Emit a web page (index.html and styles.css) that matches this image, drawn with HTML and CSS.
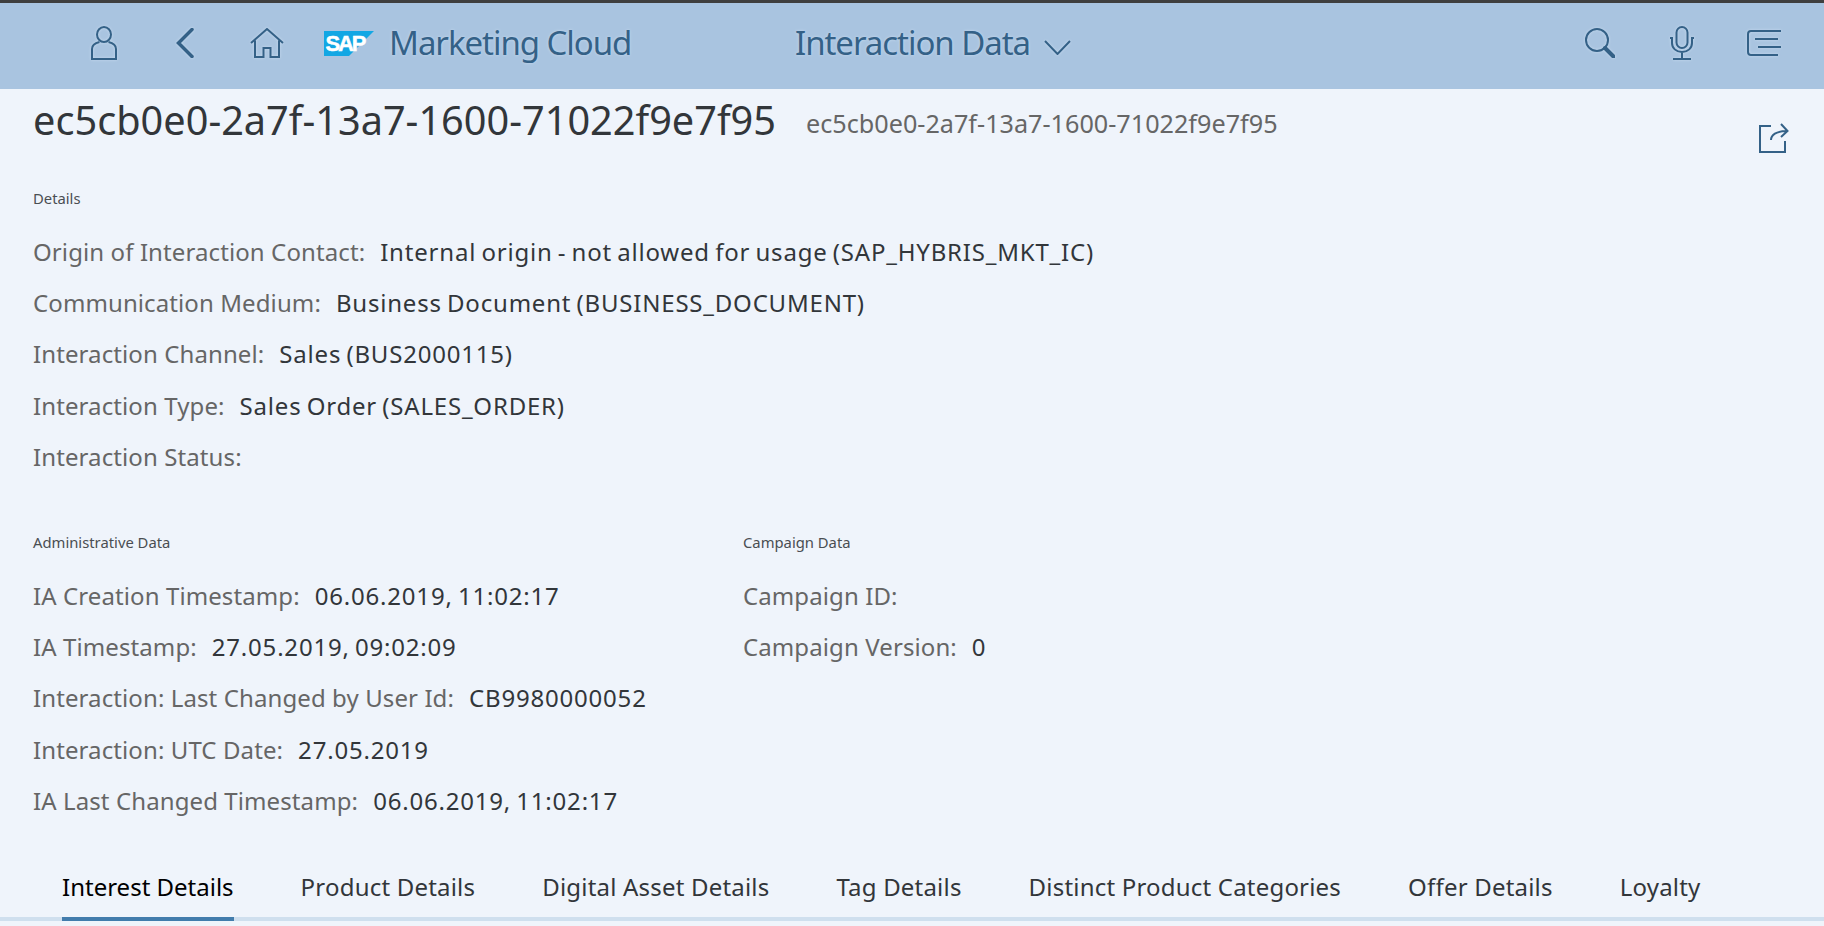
FILE: index.html
```html
<!DOCTYPE html>
<html lang="en">
<head>
<meta charset="utf-8">
<title>Interaction Data</title>
<link rel="stylesheet" href="styles.css">
</head>
<body>
<header class="shell">
  <div class="shell-left">
    <svg class="ic ic-user" viewBox="0 0 26 34"><ellipse cx="13" cy="8.500" rx="7" ry="7.500"/><path d="M8.500 16C4 17 1 19 1 23v10h24V23c0-4-3-6-7.500-7"/></svg>
    <svg class="ic ic-back" viewBox="0 0 18 30"><path d="M16 1.500 2.500 15 16 28.500"/></svg>
    <svg class="ic ic-home" viewBox="0 0 34 30"><path d="M1 15 17 1l16 14M5 12.500V29h8.500v-9h7v9H29V12.500"/></svg>
    <svg class="logo" viewBox="0 0 50 25"><path class="logo-bg" d="M0 0h50L25 25H0z"/><text class="logo-txt" x="1.500" y="20">SAP</text></svg>
    <span class="shell-title">Marketing Cloud</span>
  </div>
  <div class="shell-mid">
    <span class="shell-title">Interaction Data</span>
    <svg class="ic ic-down" viewBox="0 0 27 15"><path d="M1 1l12.500 13L26 1"/></svg>
  </div>
  <div class="shell-right">
    <svg class="ic ic-search" viewBox="0 0 30 30"><circle cx="12" cy="12" r="11"/><path class="thick" d="M20 20l8.500 8.500"/></svg>
    <svg class="ic ic-mic" viewBox="0 0 26 34"><rect x="7.500" y="1" width="11" height="21" rx="5.500"/><path d="M1 12h2v5c0 5 4 9 10 9s10-4 10-9v-5h2M13 26v7M4 33h18"/></svg>
    <svg class="ic ic-menu" viewBox="0 0 34 26"><path d="M34 1H4Q1 1 1 4v18q0 3 3 3h27M8 9h23M11 17h23"/></svg>
  </div>
</header>
<main class="content">
  <div class="head">
    <h1 class="title">ec5cb0e0-2a7f-13a7-1600-71022f9e7f95</h1>
    <span class="subtitle">ec5cb0e0-2a7f-13a7-1600-71022f9e7f95</span>
    <svg class="ic ic-share" viewBox="0 0 30 30"><path d="M12 3H1v26h25V18M12 17c0-5 5-9 16-9M22 1l6.500 7-6.500 6"/></svg>
  </div>
  <section class="details">
    <h2 class="sec">Details</h2>
    <div class="row"><span class="lbl">Origin of Interaction Contact:</span><span class="val">Internal origin - not allowed for usage (SAP_HYBRIS_MKT_IC)</span></div>
    <div class="row"><span class="lbl">Communication Medium:</span><span class="val">Business Document (BUSINESS_DOCUMENT)</span></div>
    <div class="row"><span class="lbl">Interaction Channel:</span><span class="val">Sales (BUS2000115)</span></div>
    <div class="row"><span class="lbl">Interaction Type:</span><span class="val">Sales Order (SALES_ORDER)</span></div>
    <div class="row"><span class="lbl">Interaction Status:</span></div>
  </section>
  <div class="cols">
    <section>
      <h2 class="sec">Administrative Data</h2>
      <div class="row"><span class="lbl">IA Creation Timestamp:</span><span class="val">06.06.2019, 11:02:17</span></div>
      <div class="row"><span class="lbl">IA Timestamp:</span><span class="val">27.05.2019, 09:02:09</span></div>
      <div class="row"><span class="lbl">Interaction: Last Changed by User Id:</span><span class="val">CB9980000052</span></div>
      <div class="row"><span class="lbl">Interaction: UTC Date:</span><span class="val">27.05.2019</span></div>
      <div class="row"><span class="lbl">IA Last Changed Timestamp:</span><span class="val">06.06.2019, 11:02:17</span></div>
    </section>
    <section>
      <h2 class="sec">Campaign Data</h2>
      <div class="row"><span class="lbl">Campaign ID:</span></div>
      <div class="row"><span class="lbl">Campaign Version:</span><span class="val">0</span></div>
    </section>
  </div>
  <nav class="tabs">
    <span class="tab active">Interest Details</span>
    <span class="tab">Product Details</span>
    <span class="tab">Digital Asset Details</span>
    <span class="tab">Tag Details</span>
    <span class="tab">Distinct Product Categories</span>
    <span class="tab">Offer Details</span>
    <span class="tab">Loyalty</span>
  </nav>
</main>
</body>
</html>
```
FILE: styles.css
```css
* { box-sizing: border-box; }
html, body { margin: 0; height: 100%; }
body {
  height: 926px;
  overflow: hidden;
  background: #f7f8fa;
  font-family: "Noto Sans", sans-serif;
  color: #32363a;
}
.shell {
  height: 89px;
  border-top: 3px solid #3f3f3f;
  background: #a9c4e0;
  display: flex;
  align-items: center;
  padding-bottom: 6px;
  color: #346187;
}
.shell-left { display: flex; align-items: center; width: 795px; padding-left: 91px; }
.shell-mid { display: flex; align-items: center; }
.shell-right { display: flex; align-items: center; margin-left: auto; padding-right: 43px; }
.shell-title { font-size: 33px; letter-spacing: -1.050px; line-height: 40px; text-shadow: 0 0 3px #c9dcef; white-space: nowrap; }
.ic { fill: none; stroke: #346187; stroke-width: 2; display: block; flex: none; }
.shell .ic { filter: drop-shadow(0 0 1.500px #c9dcef); }
.thick { stroke-width: 4; stroke-linecap: round; }
.ic-user { width: 26px; height: 34px; }
.ic-back { width: 18px; height: 30px; margin-left: 59px; stroke-width: 3.500; stroke-linecap: round; }
.ic-home { width: 34px; height: 30px; margin-left: 56px; }
.logo { width: 50px; height: 25px; margin-left: 40px; display: block; }
.logo-bg { fill: #12a7e4; }
.logo-txt { fill: #fff; font: 700 22px "Liberation Sans", sans-serif; letter-spacing: -2.200px; stroke: #fff; stroke-width: .5; }
.shell-left .shell-title { margin-left: 15px; }
.ic-down { width: 27px; height: 15px; margin-left: 14px; margin-top: 8px; }
.ic-search { width: 30px; height: 30px; }
.ic-mic { width: 26px; height: 34px; margin-left: 54px; }
.ic-menu { width: 34px; height: 26px; margin-left: 52px; }
.content {
  height: 837px;
  background: #eff4fb;
  padding: 0 0 0 33px;
  display: flex;
  flex-direction: column;
}
.head { display: flex; align-items: center; height: 62px; }
.title { margin: 0; font-size: 39.700px; font-weight: 400; line-height: 50px; white-space: nowrap; }
.subtitle { margin-left: 30px; font-size: 25.200px; color: #666; white-space: nowrap; position: relative; top: 3px; }
.ic-share { width: 30px; height: 30px; margin-left: auto; margin-right: 35px; margin-top: 36px; }
.sec { margin: 0 0 18px; font-size: 14.800px; font-weight: 400; line-height: 20px; height: 20px; color: #4a4e52; }
.details { margin-top: 37px; }
.row { height: 51.200px; display: flex; align-items: center; font-size: 24px; white-space: nowrap; }
.lbl { color: #666; letter-spacing: 0.100px; }
.val { margin-left: 15px; letter-spacing: 0.800px; word-spacing: -1.800px; }
.cols { display: grid; grid-template-columns: 710px 1fr; margin-top: 50px; }
.tabs { display: flex; gap: 67px; margin: 39.500px 0 0 -33px; padding-left: 62px; border-bottom: 4px solid #cfdfee; height: 55.500px; }
.tab { font-size: 24px; letter-spacing: 0.200px; color: #32363a; line-height: 44px; white-space: nowrap; }
.tab.active { color: #000; letter-spacing: 0; border-bottom: 4px solid #427cac; height: 55.500px; }
```
